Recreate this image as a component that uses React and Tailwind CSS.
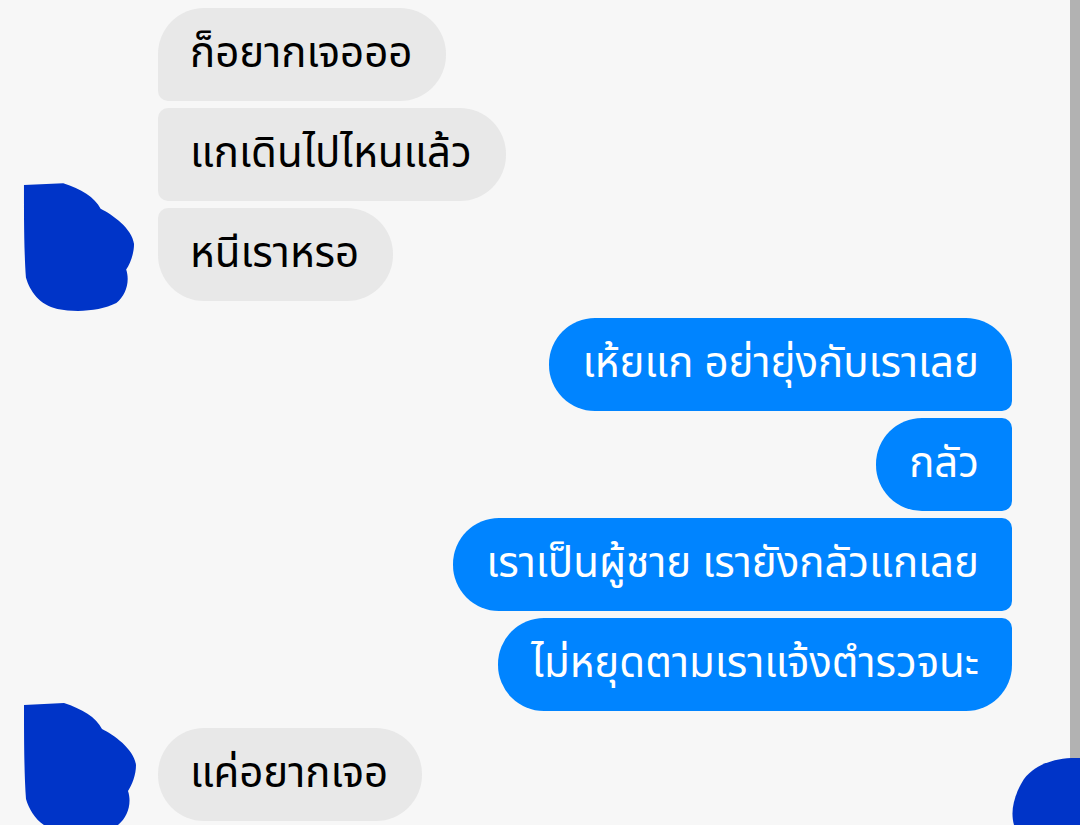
import React from 'react';

const font = { fontFamily: '"Noto Sans Thai", "Noto Sans", "DejaVu Sans", sans-serif' };

const Scribble = ({ className }) => (
  <svg viewBox="0 0 116 132" className={className}>
    <path
      d="M2 2 L42 0 C60 6 74 14 80 26 C92 32 112 46 114 62 C114 72 110 82 106 88 C110 100 106 114 96 122 C80 130 56 132 36 128 C18 124 8 110 4 96 C2 70 2 30 2 2 Z"
      fill="#0034c8"
    />
  </svg>
);

const Received = ({ text, shape }) => (
  <div
    className={`bg-[#e8e8e8] text-black h-[93px] flex items-center pl-[32px] pr-[34px] text-[42px] ${shape}`}
  >
    {text}
  </div>
);

const Sent = ({ text, shape }) => (
  <div
    className={`bg-[#0084ff] text-white h-[93px] flex items-center pl-[33px] pr-[33px] text-[42px] ${shape}`}
  >
    {text}
  </div>
);

export default function App() {
  return (
    <div className="relative w-[1080px] h-[825px] bg-[#f7f7f7] overflow-hidden flex" style={font}>
      <div className="flex-1 flex flex-col pt-[8px]">
        {/* first received group */}
        <div className="flex">
          <div className="w-[158px] flex flex-col justify-end pl-[22px]">
            <Scribble className="w-[114px] h-[130px] -mb-[12px]" />
          </div>
          <div className="flex flex-col items-start gap-[7px]">
            <Received text="ก็อยากเจอออ" shape="rounded-[46px] rounded-bl-[10px]" />
            <Received text="แกเดินไปไหนแล้ว" shape="rounded-r-[46px] rounded-l-[10px]" />
            <Received text="หนีเราหรอ" shape="rounded-[46px] rounded-tl-[10px]" />
          </div>
        </div>

        {/* sent group */}
        <div className="flex flex-col items-end gap-[7px] pr-[58px] mt-[17px]">
          <Sent text="เห้ยแก อย่ายุ่งกับเราเลย" shape="rounded-[46px] rounded-br-[10px]" />
          <Sent text="กลัว" shape="rounded-l-[46px] rounded-r-[10px]" />
          <Sent text="เราเป็นผู้ชาย เรายังกลัวแกเลย" shape="rounded-l-[46px] rounded-r-[10px]" />
          <Sent text="ไม่หยุดตามเราแจ้งตำรวจนะ" shape="rounded-[46px] rounded-tr-[10px]" />
        </div>

        {/* last received */}
        <div className="flex mt-[17px]">
          <div className="w-[158px] pl-[22px] flex items-start -mt-[25px]">
            <Scribble className="w-[116px] h-[132px]" />
          </div>
          <Received text="แค่อยากเจอ" shape="rounded-[46px]" />
        </div>
      </div>
      <div className="w-[10px] bg-[#b2b2b2]" />
      <div className="absolute right-0 top-[755px]">
        <svg viewBox="0 0 70 70" className="w-[70px] h-[70px]">
          <path d="M4 70 C0 56 4 40 14 24 C26 8 48 2 70 3 L70 70 Z" fill="#0034c8" />
        </svg>
      </div>
    </div>
  );
}
